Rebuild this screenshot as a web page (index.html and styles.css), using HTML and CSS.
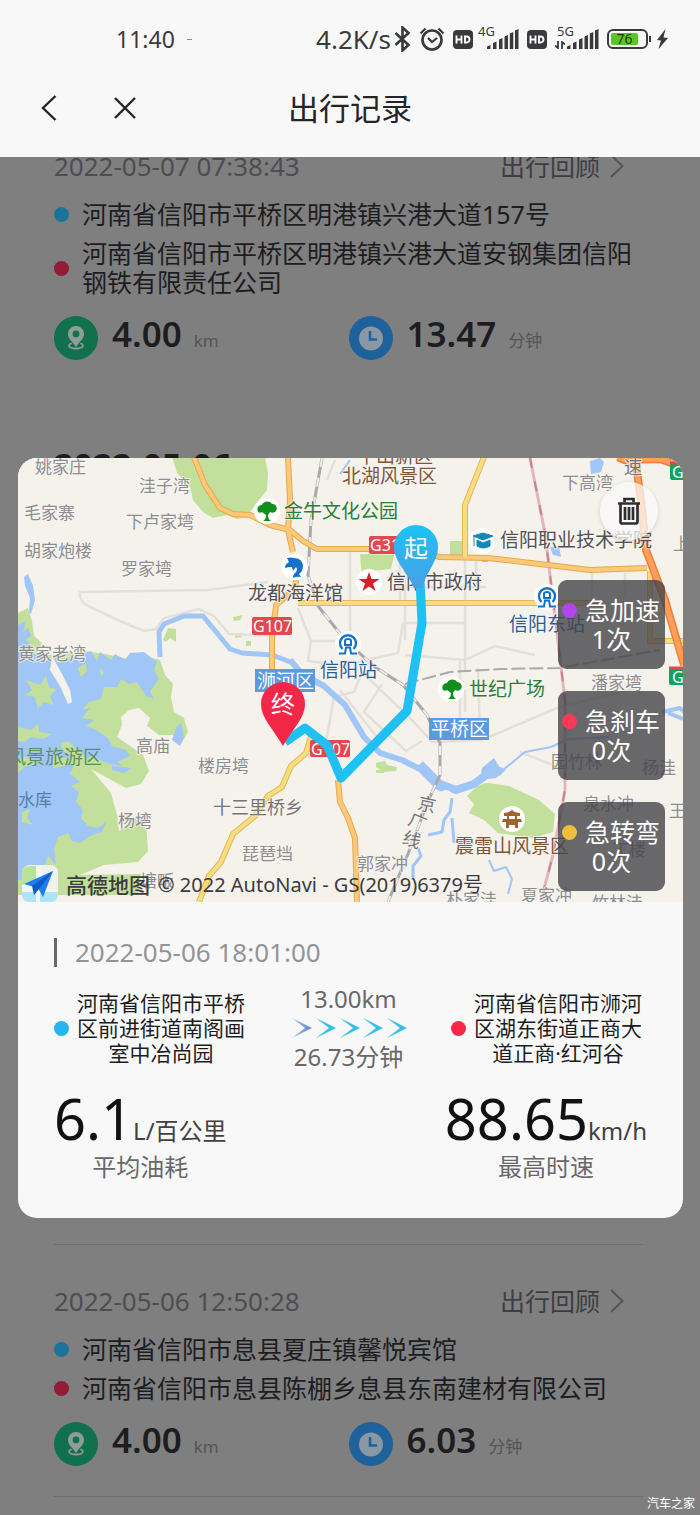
FILE: index.html
```html
<!DOCTYPE html>
<html lang="zh-CN">
<head>
<meta charset="utf-8">
<meta name="viewport" content="width=device-width, initial-scale=1">
<title>出行记录</title>
<link rel="stylesheet" href="styles.css">
</head>
<body>
<svg class="defs" width="0" height="0" aria-hidden="true">
  <symbol id="i-signal" viewBox="0 0 32 20"><path d="M0 20v-2.500l3.500-1.500v4zM6 20v-6l3.500-1.500V20zM12 20v-9.500l3.500-1.500v11zM17.500 20V7.500L21 6v14zM22.800 20V4.500L26.300 3v17zM28 20V1.500L31.500 0v20z" fill="currentColor"/></symbol>
  <symbol id="i-hd" viewBox="0 0 20 19"><rect width="20" height="19" rx="4" fill="#3a3a3c"/><path d="M3.500 5.500v8M8.500 5.500v8M3.500 9.500h5M12 6.500v6h1.500a3 3 0 0 0 0-6z" fill="none" stroke="#fff" stroke-width="1.900"/></symbol>
  <symbol id="i-pin" viewBox="0 0 44 44"><circle cx="22" cy="22" r="22" fill="#11714f"/><path d="M22 10a8 8 0 0 1 8 8c0 5-5 8-8 13-3-5-8-8-8-13a8 8 0 0 1 8-8zm0 4.500a3.400 3.400 0 1 0 0 6.800 3.400 3.400 0 0 0 0-6.800z" fill="#8f9c97" fill-rule="evenodd"/><path d="M17 27.500c-4 2-1.500 5 5 5s9-3 5-5" fill="none" stroke="#8f9c97" stroke-width="1.800" stroke-linecap="round"/></symbol>
  <symbol id="i-clock" viewBox="0 0 44 44"><circle cx="22" cy="22" r="22" fill="#1f629b"/><circle cx="22" cy="22.500" r="12" fill="#8a98a5"/><path d="M21 15v8.500h7" fill="none" stroke="#1f629b" stroke-width="2.600"/></symbol>
  <symbol id="i-next" viewBox="0 0 14 24"><path d="M1 1l11.500 11L1 23" fill="none" stroke="currentColor" stroke-width="2"/></symbol>
  <symbol id="i-tree" viewBox="-12 -12 24 24"><path d="M-9 1c-2-4 1-7 4-7 1-4 8-5 10-1 4 0 6 4 4 7-2 2-4 2-6 1L1 4c0 3 1 5 3 6h-8c2-1 3-3 3-6l-4-3c-1 1-3 1-4 0z" fill="#118e1c"/></symbol>
  <symbol id="i-station" viewBox="-12 -12 24 24"><path d="M-5.500 5a8 8 0 1 1 11 0" fill="none" stroke="#1671c9" stroke-width="2.400"/><path d="M-3 1v-4q0-2 3-2t3 2v4zM-9 9.500h6l1-6h4l1 6h6" fill="none" stroke="#1671c9" stroke-width="2"/></symbol>
</svg>

<header class="top">
  <div class="status">
    <div class="status-time"><span>11:40</span><span class="tick"></span></div>
    <div class="status-right">
      <span class="speed">4.2K/s</span>
      <svg width="17" height="26" viewBox="0 0 17 26" aria-label="蓝牙"><path d="M1.500 7l13 12L8.500 24.500V1.500L14.500 7l-13 12" fill="none" stroke="#3a3a3c" stroke-width="2.600"/></svg>
      <svg width="26" height="24" viewBox="0 0 26 24" aria-label="闹钟"><circle cx="13" cy="13" r="9.500" fill="none" stroke="#3a3a3c" stroke-width="2.600"/><path d="M9 11l4 4 5-4M1.500 6.500l5-5M24.500 6.500l-5-5" fill="none" stroke="#3a3a3c" stroke-width="2.200"/></svg>
      <svg width="20" height="19"><use href="#i-hd"/></svg>
      <span class="net"><span class="gen">4G</span><svg width="32" height="20"><use href="#i-signal"/></svg></span>
      <svg width="20" height="19"><use href="#i-hd"/></svg>
      <span class="net net-active"><span class="gen">5G</span><svg class="updown" width="10" height="8" viewBox="0 0 10 8"><path d="M3 0v7L0 4.500M7 8V1l3 2.500" fill="none" stroke="currentColor" stroke-width="1.800"/></svg><svg width="32" height="20"><use href="#i-signal"/></svg></span>
      <span class="battery"><span class="battery-level">76</span></span>
      <svg width="12" height="20" viewBox="0 0 12 20" aria-label="充电中"><path d="M9.500 0L1 11l4 .5L2.500 20 12 9 7.500 8.500z" fill="#3a3a3c"/></svg>
    </div>
  </div>
  <nav class="nav">
    <div class="nav-actions">
      <button class="icon-btn" aria-label="返回"><svg width="16" height="26" viewBox="0 0 16 26"><path d="M14.500 1L2 13l12.500 12" fill="none" stroke="#252528" stroke-width="2.400"/></svg></button>
      <button class="icon-btn" aria-label="关闭"><svg width="22" height="22" viewBox="0 0 22 22"><path d="M1 1l20 20M21 1L1 21" fill="none" stroke="#252528" stroke-width="2.400"/></svg></button>
    </div>
    <h1 class="nav-title">出行记录</h1>
  </nav>
</header>

<main class="main">
  <div class="list">
    <article class="trip trip-first">
      <div class="trip-head"><time>2022-05-07 07:38:43</time><a href="#review">出行回顾<svg width="14" height="24"><use href="#i-next"/></svg></a></div>
      <ul class="places">
        <li class="from">河南省信阳市平桥区明港镇兴港大道157号</li>
        <li class="to">河南省信阳市平桥区明港镇兴港大道安钢集团信阳钢铁有限责任公司</li>
      </ul>
      <div class="figures">
        <div class="figure"><svg width="44" height="44"><use href="#i-pin"/></svg><p><b>4.00</b><span>km</span></p></div>
        <div class="figure"><svg width="44" height="44"><use href="#i-clock"/></svg><p><b>13.47</b><span>分钟</span></p></div>
      </div>
    </article>
    <h2 class="day">2022-05-06</h2>
    <article class="trip">
      <div class="trip-head"><time>2022-05-06 12:50:28</time><a href="#review">出行回顾<svg width="14" height="24"><use href="#i-next"/></svg></a></div>
      <ul class="places">
        <li class="from">河南省信阳市息县夏庄镇馨悦宾馆</li>
        <li class="to">河南省信阳市息县陈棚乡息县东南建材有限公司</li>
      </ul>
      <div class="figures">
        <div class="figure"><svg width="44" height="44"><use href="#i-pin"/></svg><p><b>4.00</b><span>km</span></p></div>
        <div class="figure"><svg width="44" height="44"><use href="#i-clock"/></svg><p><b>6.03</b><span>分钟</span></p></div>
      </div>
    </article>
  </div>

  <div class="overlay">
    <section class="modal" role="dialog" aria-label="行程详情">
      <div class="map-wrap">
        <svg class="map" viewBox="18 458 665 444" preserveAspectRatio="xMidYMid slice">
          <defs>
            <linearGradient id="g-start" x1="0" y1="0" x2="0" y2="1"><stop offset="0" stop-color="#1cc2f2"/><stop offset="1" stop-color="#4a9fe6"/></linearGradient>
          </defs>
          <rect x="18" y="458" width="665" height="444" fill="#f5f2ec"/>

          <!-- parks and woodland -->
          <g fill="#c2e09b">
            <path d="M172 457l5 16 13 14 3 13 10 12 10 6 14-3 10 4 10-2 8-12 12-15 1-17-3-16z"/>
            <path d="M450 541h14l-1 14h-13zM360 554l34 1-3 14-20 2-9 8zM163 640l5-12 8 1 0 13-6-4-4 4zM233 617l10-2-3 5-6 1zM235 634l8-1-2 4-6 1zM246 641h5v5h-5zM376 763l9-2 2 4 10 2-1 4-12 1-8-5zM376 770h8v3h-8z"/>
            <path d="M467 796q12-14 22-13l20 3 30 14 16 14-2 18-20 6-35-5-14-13-15-7 5-9z"/>
            <path d="M18 613l10-5 4 13 2 15 8 7-6 12-18 4zM85 651l20 3 20 4 18-2 17 4 5 15 8 9-2 13 3 15 10 6 4 14-7 12-8-9-14 0-12-9 3-8-11-10-10 2-8 7 1 8-5 12 26 18 6 16-8 13-15 4-35-19 20 24 6 22 2 16 15-13 12-1 1 19 1 15-10 11-34 3-24 10 61-1-3 21H18V655h40z"/>
          </g>

          <!-- reservoir -->
          <g fill="#a0c5f7">
            <path d="M24 577l4-3 5 12 2 14-4 14-2-2 1-14-5-12zM18 625l8-4-3 11 5-4 3 8-6 4 6 3-8 8 8 3 10-1 4 8 10-4 2 6 34-12 6 10 3-9 11 8 4-6 10 6 5-7 14-1 13 10-3 8 5 9-9 12 4 8-8-3-9-14-8 2-8-5-4 8-13 0-3 12-12 3-7 8 8-2-8 10 12 2-8 6 10 4 12 8 4 8 14 4 4 6-13 6 6 4-14-2-18-8-3 3-20-18-8 2 4 8 8 5-7 5 9 5-4 8 10 8-9 4 8 6-3 10 7 8-2 8 7 8 10 2 8-6-4 10-12 4-10 7-8-2-4-8-10 4-4 12 2 16-8-9-4 12-10-2-2 8 6 6H18z"/>
            <path d="M176 728l5-6 3 15-4 9-8-6zM112 766l20 2-8 5-12-3z"/>
          </g>
          <g fill="#c2e09b"><path d="M26 680l14 5 6-9 3 12 8 1-7 7 4 9-11-3-5 7-3-12-10-2 7-5zM78 668l8-5 1 8-6 6zM18 727l13 3 7-6 1 8 13 2-9 5-12-2-6 5-7-1zM18 760l8-4 10 8-10 2-8 7zM53 756l18 3-6 7-12 2zM22 812l8-3-3 9 6 7-11-3zM80 668l5-3 0 6zM100 668l4 4-3 5z"/></g>
          <path d="M50 670l2-14 10 18 8 16 2 12-4 2-8-18z" fill="#f5f2ec"/>

          <!-- minor streets -->
          <g fill="none" stroke="#e3e0db" stroke-width="2.500">
            <path d="M268 582l-60 8-128 2q-2 9 10 15l32 15 22 9 12-2 8-11 35-9 15 7 15 18 44 2"/>
            <path d="M298 608l13 33-3 20 40 5M311 641h25M350 552v80M405 560v80M465 560v110M400 587h86M400 560v42M476 560v30M403 623h62M403 623l-5 30-45 10M405 655l60 5 30-14 40 9M592 573v28M625 573v25M362 672l-8 20-20 5-8 45M362 672l50 48 20 22 50-2 75-32 80-20M382 684l-18 28 42 39 16-10M340 690l36 46M335 460l-8 20M460 660v60M465 690v22M480 736l-2-68M520 752l35 14 14 2"/>
          </g>

          <!-- rivers -->
          <g fill="none" stroke="#a0c5f7" stroke-linejoin="round">
            <path d="M160 657l-1-25 5-8 20-8 19 0 14 17 13 16 12 4 30 2 21 8" stroke-width="5"/>
            <path d="M290 660l12 14 22 12 21 19 19 32 16 16 22 7 18 9 18 18 10 4" stroke-width="6"/>
            <path d="M420 764l20 20 16 6 18-6 20-15 8 3" stroke-width="8"/>
            <path d="M452 798l-2 14-6 8-2 12-14 3M418 848l3 8-8 10 0 14M452 818l2 25" stroke-width="3"/>
            <path d="M503 770l22-18 26-5 18-8 40-2M340 474l10-14M489 860l5 11 12-4 6 12-4 15" stroke-width="2"/>
            <path d="M662 712l18-4 4 4M668 713l15 6" stroke-width="4"/>
          </g>
          <path d="M482 768l12-10 6 10 6 2-10 8-16 2zM590 461l10-3 4 4-3 10-10 2zM550 547h9l2 10-8-2zM482 555h6v7h-6z" fill="#a0c5f7"/>
          <ellipse cx="446" cy="793" rx="5" ry="3" fill="#f5f2ec"/>

          <!-- railways -->
          <g fill="none" stroke="#a9a9ac" stroke-width="3">
            <path d="M322 458l-11 62-3 55 10 31 27 34 30 27 28 18 24 30 13 28v32l-12 26-18 48-22 53"/>
            <path d="M405 684l45-12 50-3 60-1 100-18" stroke-width="2" stroke-dasharray="14 4"/>
          </g>
          <path d="M322 458l-11 62-3 55 10 31 27 34 30 27 28 18 24 30 13 28v32l-12 26-18 48-22 53" fill="none" stroke="#eeedea" stroke-width="2" stroke-dasharray="9 11"/>
          <path d="M530 458l15 75 8 67 6 50 6 50v90l-12 65-12 45" fill="none" stroke="#e3b6bb" stroke-width="3"/>
          <path d="M530 458l15 75 8 67 6 50 6 50v90l-12 65-12 45" fill="none" stroke="#c98490" stroke-width="2" stroke-dasharray="10 14"/>

          <!-- trunk roads -->
          <g fill="none" stroke="#e5a94e" stroke-width="6" stroke-linejoin="round">
            <path d="M194 457l11 28 15 23 13 6 17 1 20 10 20 5 13 11 14 8h85l38 8 48 1 102 12 57-2M288 457l2 43-2 30 5 22M296 580l-1 9-19 16-4 35v32M338 780l2 22 8 16 7 20 2 64"/>
          </g>
          <g fill="none" stroke="#fbc978" stroke-width="4" stroke-linejoin="round">
            <path d="M194 457l11 28 15 23 13 6 17 1 20 10 20 5 13 11 14 8h85l38 8 48 1 102 12 57-2M288 457l2 43-2 30 5 22M296 580l-1 9-19 16-4 35v32M338 780l2 22 8 16 7 20 2 64"/>
          </g>
          <g fill="none" stroke="#e0b955" stroke-width="6"><path d="M484 457l-19 48v52M298 603h300M312 733l-6 20-15 13-9 21-14 9-13 20-22 18-12 28-12 14-10 26M650 571v70h33"/></g>
          <g fill="none" stroke="#f8dc80" stroke-width="4"><path d="M484 457l-19 48v52M298 603h300M312 733l-6 20-15 13-9 21-14 9-13 20-22 18-12 28-12 14-10 26M650 571v70h33"/></g>
          <path d="M618 457l18 8 5 35 5 50 19 50 19 65M625 460l35-1 23 8" fill="none" stroke="#ef7f36" stroke-width="8"/>
          <path d="M618 457l18 8 5 35 5 50 19 50 19 65M625 460l35-1 23 8" fill="none" stroke="#fd9e5b" stroke-width="5"/>

          <!-- place names -->
          <g class="lbl village">
            <text x="35" y="473">姚家庄</text><text x="139" y="492">洼子湾</text><text x="24" y="519">毛家寨</text>
            <text x="126" y="528">下卢家塆</text><text x="24" y="557">胡家炮楼</text><text x="121" y="575">罗家塆</text>
            <text x="18" y="660">黄家老湾</text><text x="136" y="752">高庙</text><text x="198" y="772">楼房塆</text>
            <text x="118" y="827">杨塆</text><text x="242" y="860">琵琶垱</text><text x="357" y="870">郭家冲</text>
            <text x="446" y="906">朴家洼</text><text x="521" y="902">夏家冲</text><text x="592" y="909">竹林洼</text>
            <text x="562" y="489">下高湾</text><text x="673" y="550">上</text><text x="591" y="689">潘家塆</text>
            <text x="551" y="768">园竹林</text><text x="642" y="774">杨洼</text><text x="583" y="810">泉水冲</text>
            <text x="669" y="817">王</text><text x="612" y="856">丁楼</text><text x="140" y="887">塘畈</text><text x="18" y="806" class="water">水库</text>
          </g>
          <g class="lbl poi">
            <text x="357" y="463" class="brown">牛山新区</text><text x="342" y="483" class="brown">北湖风景区</text>
            <text x="284" y="518" class="green">金牛文化公园</text><text x="248" y="600">龙都海洋馆</text>
            <text x="387" y="589">信阳市政府</text><text x="500" y="547">信阳职业技术学院</text>
            <text x="320" y="677" class="blue">信阳站</text><text x="509" y="631" class="blue">信阳东站</text>
            <text x="469" y="696" class="green">世纪广场</text><text x="455" y="853" class="brown">震雷山风景区</text>
            <text x="7" y="764" class="scenic">风景旅游区</text><text x="213" y="814" class="town">十三里桥乡</text>
            <text x="624" y="474" class="town">速</text>
            <text x="418" y="811" class="town" transform="rotate(12 427 804)">京</text><text x="409" y="828" class="town" transform="rotate(22 418 821)">广</text><text x="403" y="846" class="town" transform="rotate(18 412 839)">线</text>
          </g>

          <!-- district and road badges -->
          <rect x="255" y="669" width="60" height="23" fill="#5a9be0"/><rect x="429" y="718" width="60" height="22" fill="#5a9be0"/>
          <g class="badge-text"><text x="257" y="688">浉河区</text><text x="431" y="736">平桥区</text></g>
          <rect x="252" y="617" width="40" height="18" rx="2" fill="#e5474f"/><rect x="369" y="536" width="40" height="18" rx="2" fill="#e5474f"/><rect x="310" y="740" width="40" height="17" rx="2" fill="#e5474f"/>
          <g fill="#0fa35f"><rect x="670" y="463" width="16" height="17" rx="2"/><rect x="669" y="668" width="16" height="17" rx="2"/></g>
          <path d="M670 463h13M669 668h14" stroke="#e5474f" stroke-width="3"/>
          <g class="road-no"><text x="253" y="632">G107</text><text x="370" y="551">G312</text><text x="311" y="755">G107</text><text x="672" y="478">G</text><text x="672" y="683">G</text></g>

          <!-- points of interest -->
          <g fill="#fff"><circle cx="267" cy="511" r="13"/><circle cx="295" cy="567" r="13"/><circle cx="369" cy="582" r="13"/><circle cx="482" cy="541" r="13"/><circle cx="547" cy="597" r="13"/><circle cx="348" cy="644" r="13"/><circle cx="451" cy="689" r="13"/><circle cx="512" cy="819" r="13"/></g>
          <use href="#i-tree" x="255" y="499" width="24" height="24"/><use href="#i-tree" x="440" y="677" width="24" height="24"/>
          <use href="#i-station" x="535" y="585" width="24" height="24"/><use href="#i-station" x="336" y="632" width="24" height="24"/>
          <path d="M285 568q0-4 4-6l-2-4q4-1 7 0 8 0 9 8 0 5-4 8l2 3q-5-1-8 1 0-4 3-6 2-3 0-5l-3 4-1-4q-4 0-7 1z" fill="#1671c9"/>
          <path d="M369 572l2.500 7h8l-6.500 4.500 2.500 7.500-6.500-4.500-6.500 4.500 2.500-7.500-6.500-4.500h8z" fill="#d3202a"/>
          <path d="M473 536l10-3 10 3-10 4zM477 540l6 3 7-3v6q-7 4-13 0zM474 537v9" fill="#1487b5" stroke="#1487b5"/>
          <path d="M504 813q8-1 8-4 0 3 8 4v3h-16zM503 819h18l1 3h-20zM506 822h12v6h-3v-3h-6v3h-3zM507 815h2v5h-2zM515 815h2v5h-2z" fill="#a0622f"/>

          <!-- recorded route -->
          <path d="M420 580l2 43-15 88-66 67-14-33-22-17-20 14" fill="none" stroke="#1fc1f2" stroke-width="9" stroke-linejoin="round"/>
          <path d="M416 525a22 22 0 0 1 22 22c0 14-10 22-16 41h-8c-6-15-20-27-20-41a22 22 0 0 1 22-22z" fill="url(#g-start)"/>
          <path d="M283 682a22 22 0 0 1 22 22c0 14-13 26-22 42-9-16-22-28-22-42a22 22 0 0 1 22-22z" fill="#f32748"/>
          <g class="pin-text"><text x="416" y="557">起</text><text x="283" y="713">终</text></g>
        </svg>

        <button class="delete" aria-label="删除"><svg width="24" height="28" viewBox="0 0 24 28"><path d="M7.500 5V2h9v3M1 6.500h22M3.500 7v17.500q0 2 2 2h13q2 0 2-2V7M8 10v13M12 10v13M16 10v13" fill="none" stroke="#2e2e31" stroke-width="2.700"/></svg></button>
        <ul class="events">
          <li class="accel"><span>急加速</span>1次</li>
          <li class="brake"><span>急刹车</span>0次</li>
          <li class="turn"><span>急转弯</span>0次</li>
        </ul>
        <p class="credit">
          <svg width="36" height="37" viewBox="0 0 36 37"><rect width="36" height="37" rx="8" fill="#f3f5f3"/><path d="M0 9q0-8 8-8h6v14L0 20z" fill="#b9e39a"/><path d="M20 0h8q8 0 8 8v16H20z" fill="#eef1ec"/><path d="M0 27h14v10H8q-8 0-8-8zM18 27h18v2q0 8-8 8H18z" fill="#aee3f8"/><path d="M2 19L31 6 21 32l-5-9z" fill="#1e7df0"/><path d="M31 6L10 21l2 9 5-6z" fill="#0f5cc8"/></svg>
          <span class="credit-logo">高德地图</span><span>© 2022 AutoNavi - GS(2019)6379号</span>
        </p>
      </div>

      <div class="detail">
        <time class="detail-time">2022-05-06 18:01:00</time>
        <div class="route">
          <p class="end from">河南省信阳市平桥区前进街道南阁画室中冶尚园</p>
          <div class="leg">
            <span>13.00km</span>
            <svg width="116" height="20" viewBox="0 0 116 20"><defs><linearGradient id="g-a" x1="0" x2="1"><stop offset="0" stop-color="#8ec8f4"/><stop offset="1" stop-color="#6c86cb"/></linearGradient></defs><path d="M1 0l20 10L1 20l13-10z" fill="url(#g-a)"/><path d="M25 0l20 10-20 10 13-10zM49 0l20 10-20 10 13-10zM72 0l20 10-20 10 13-10zM96 0l20 10-20 10 13-10z" fill="#34bfe6"/></svg>
            <span>26.73分钟</span>
          </div>
          <p class="end to">河南省信阳市浉河区湖东街道正商大道正商·红河谷</p>
        </div>
        <div class="totals">
          <div class="total"><p><b>6.1</b>L/百公里</p><span>平均油耗</span></div>
          <div class="total"><p><b>88.65</b>km/h</p><span>最高时速</span></div>
        </div>
      </div>
    </section>
  </div>
  <span class="watermark">汽车之家</span>
</main>
</body>
</html>
```
FILE: styles.css
```css
* { box-sizing: border-box; }

body {
  margin: 0;
  min-height: 100vh;
  display: flex;
  flex-direction: column;
  font-family: "Noto Sans", "Noto Sans CJK SC", sans-serif;
  background: #7f7f7f;
  color: #1d1d1f;
}

h1, h2, p, ul { margin: 0; padding: 0; font-weight: 400; }
ul { list-style: none; }
svg { display: block; flex: none; }
a { color: inherit; text-decoration: none; }
button { border: 0; padding: 0; background: none; font: inherit; color: inherit; }
.defs { position: absolute; }

/* header */
.top { background: #f8f8f8; padding-bottom: 19px; }

.status {
  display: flex;
  justify-content: space-between;
  align-items: center;
  height: 78px;
  padding: 0 32px 0 116px;
  color: #3a3a3c;
  font-size: 23px;
}
.status-time { display: flex; align-items: center; gap: 12px; }
.tick { width: 5px; height: 1px; background: #8a8a8a; }
.status-right { display: flex; align-items: center; gap: 8px; }
.speed { font-size: 26px; line-height: 32px; margin-right: -5px; }
.net { position: relative; padding-left: 6px; }
.net-active { padding-left: 12px; }
.gen { position: absolute; left: -3px; top: -6px; font-size: 13px; line-height: 16px; }
.net-active .gen { left: 2px; }
.updown { position: absolute; left: 0; bottom: 0; }
.battery {
  position: relative;
  width: 41px;
  height: 20px;
  padding: 2px;
  border: 2px solid #3a3a3c;
  border-radius: 6px;
}
.battery::after {
  content: "";
  position: absolute;
  right: -5px;
  top: 5px;
  width: 2px;
  height: 6px;
  background: #3a3a3c;
}
.battery-level {
  display: block;
  width: 27px;
  height: 12px;
  border-radius: 2px;
  background: #5cc526;
  color: #1d3a10;
  font-size: 14px;
  line-height: 12px;
  text-align: center;
}

.nav {
  display: grid;
  grid-template-columns: 1fr auto 1fr;
  align-items: center;
  height: 60px;
  padding: 0 41px;
}
.nav-actions { display: flex; gap: 57px; }
.icon-btn { display: flex; align-items: center; }
.nav-title { font-size: 31px; line-height: 40px; color: #252528; }

/* trip list behind the dialog */
.main { flex: 1; position: relative; overflow: hidden; }
.list { margin-top: -7px; }
.trip { margin: 0 57px 0 54px; padding: 40px 0 30px; border: solid #6f6f70; border-width: 1px 0; }
.trip-first { padding-top: 0; border: 0; }
.trip-head {
  display: flex;
  justify-content: space-between;
  align-items: center;
  padding-right: 19px;
  line-height: 32px;
}
.trip-head time { font-size: 26px; color: #4d4d52; }
.trip-head a { display: flex; align-items: center; gap: 10px; font-size: 25px; color: #3e3e42; }
.trip-head svg { color: #55555a; }

.places {
  display: grid;
  gap: 10px;
  padding: 18px 0 19px;
  font-size: 25px;
  line-height: 29px;
}
.places li { display: flex; align-items: center; gap: 13px; }
.from::before, .to::before {
  content: "";
  flex: none;
  width: 15px;
  height: 15px;
  border-radius: 50%;
}
.places .from::before { background: #1c7399; }
.places .to::before { background: #901c35; }

.figures { display: grid; grid-template-columns: 1fr 1fr; }
.figure { display: flex; align-items: center; gap: 14px; height: 44px; }
.figure p { display: flex; align-items: baseline; gap: 12px; line-height: 44px; padding-bottom: 2px; }
.figure b { font-size: 35px; font-weight: 600; }
.figure span { font-size: 17px; color: #555; }

.day {
  min-height: 803px;
  padding: 0 54px;
  margin-top: 51px;
  font-size: 34px;
  line-height: 48px;
  font-weight: 700;
}

/* dialog */
.overlay {
  position: absolute;
  inset: 0;
  display: flex;
  align-items: center;
  padding: 4px 17px 0 18px;
}
.modal { flex: 1; border-radius: 19px; overflow: hidden; background: #f8f8f8; }

.map-wrap { position: relative; }
.map { width: 100%; height: 444px; }
.lbl { paint-order: stroke; stroke: #f8f6f1; stroke-width: 2px; stroke-opacity: .7; }
.village { font-size: 17px; fill: #8d8d8f; }
.poi { font-size: 19px; fill: #505053; }
.brown { fill: #80563a; }
.green { fill: #2a8035; }
.blue { fill: #245f9c; }
.water { fill: #5680aa; stroke: none; }
.scenic { fill: #5d9160; stroke: none; }
.town { font-size: 18px; fill: #747476; }
.badge-text { font-size: 19px; fill: #fff; }
.road-no { font-size: 16px; fill: #fff; }
.pin-text { font-size: 24px; fill: #fff; text-anchor: middle; }

.delete {
  position: absolute;
  top: 24px;
  right: 25px;
  width: 58px;
  height: 58px;
  display: grid;
  place-items: center;
  border-radius: 50%;
  background: rgba(250, 250, 250, .75);
  box-shadow: 0 1px 4px rgba(0, 0, 0, .15);
}
.events {
  position: absolute;
  top: 122px;
  right: 18px;
  display: grid;
  gap: 22px;
  color: #fff;
  font-size: 25px;
  line-height: 29px;
  text-align: center;
}
.events li { width: 107px; height: 89px; padding: 16px 4px; border-radius: 9px; background: rgba(69, 68, 73, .8); }
.events span { display: flex; align-items: center; gap: 8px; }
.events span::before { content: ""; width: 15px; height: 15px; border-radius: 50%; }
.accel span::before { background: #b345ee; }
.brake span::before { background: #f83a56; }
.turn span::before { background: #efc03c; }

.credit {
  position: absolute;
  left: 4px;
  bottom: 0;
  display: flex;
  align-items: center;
  gap: 8px;
  font-size: 20px;
  color: #3b3b3d;
}
.credit-logo { font-size: 21px; font-weight: 500; }

.detail { display: grid; padding: 34px 36px 36px; }
.detail-time {
  display: flex;
  align-items: center;
  gap: 18px;
  font-size: 26px;
  line-height: 32px;
  color: #949496;
}
.detail-time::before { content: ""; width: 3px; height: 29px; background: #68686b; }

.route {
  display: flex;
  justify-content: space-between;
  align-items: center;
  padding: 15px 4px 0 0;
}
.end { display: flex; align-items: center; gap: 7px; width: 192px; font-size: 21px; line-height: 25px; text-align: center; }
.end.from::before { background: #26b4f0; }
.end.to::before { background: #fa2848; }
.leg { display: grid; justify-items: center; gap: 3px; font-size: 24px; line-height: 32px; color: #68686b; }

.totals { display: flex; justify-content: space-between; padding-top: 17px; }
.total { display: grid; gap: 6px; text-align: center; font-size: 24px; line-height: 30px; color: #68686b; }
.total p { color: #414144; }
.total b { font-size: 56px; line-height: 56px; font-weight: 400; color: #111113; }

.watermark { position: absolute; right: 5px; bottom: 2px; font-size: 12px; line-height: 18px; color: #fff; }
```
